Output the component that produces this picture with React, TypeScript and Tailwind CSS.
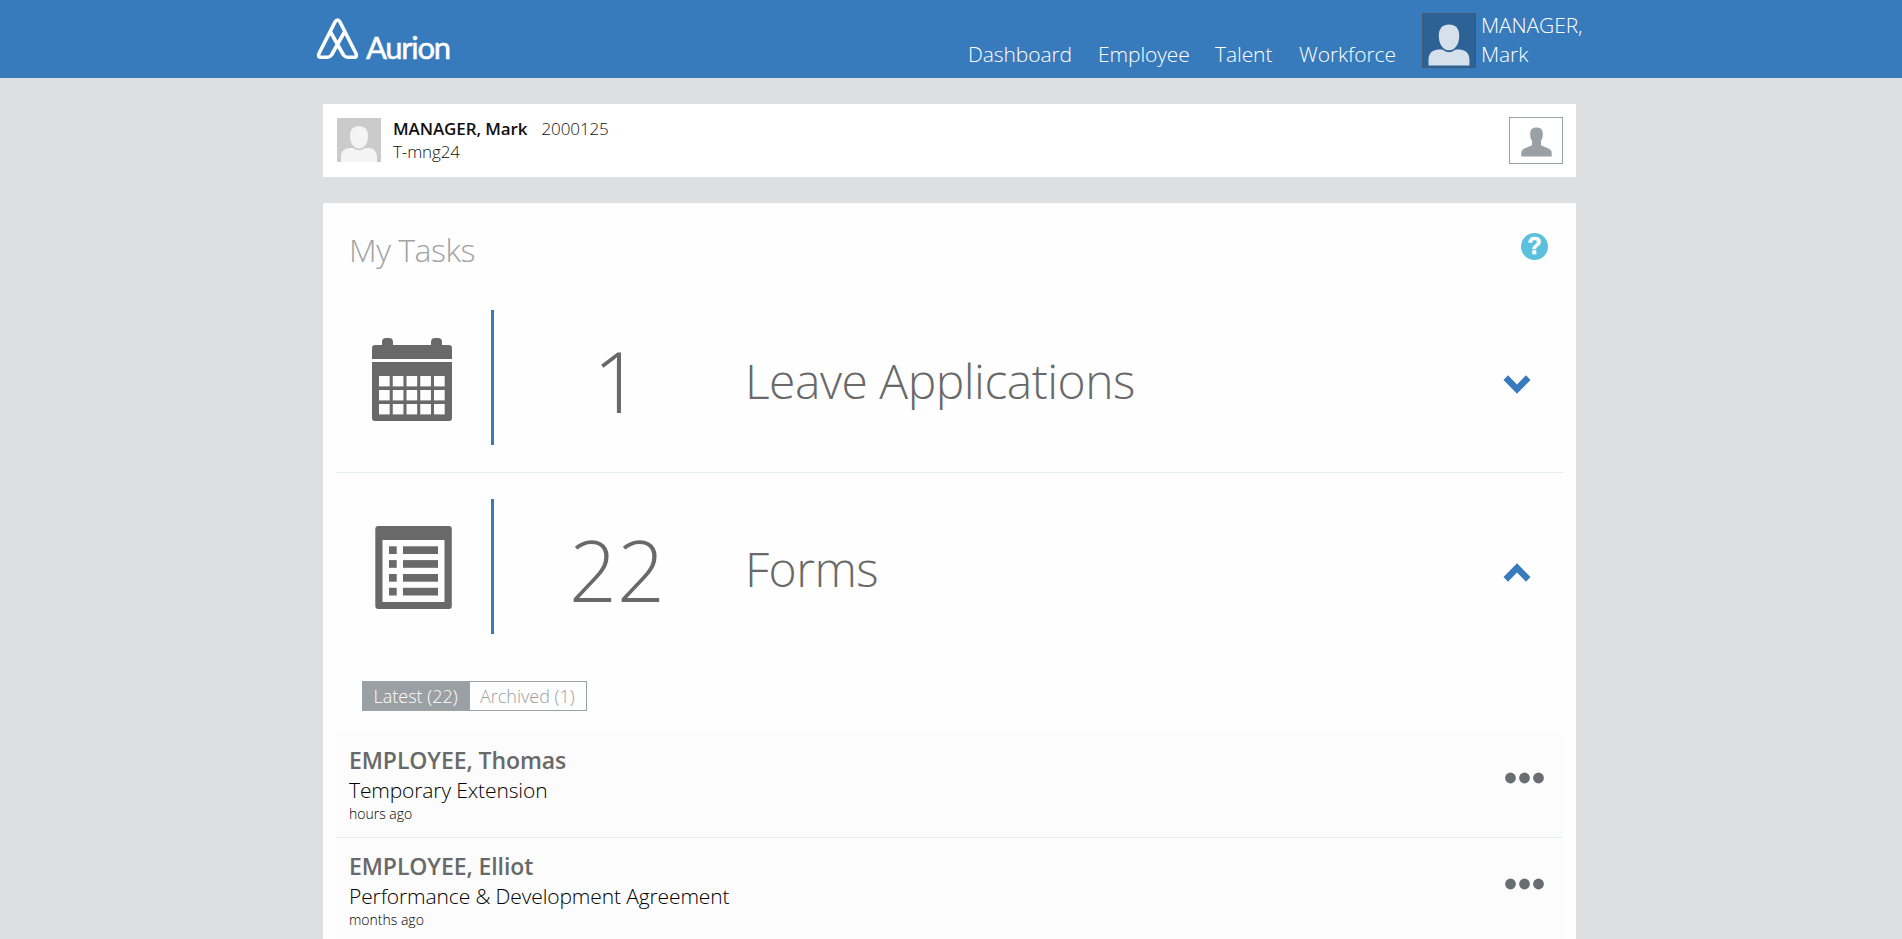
import React from "react";

const NAV = [
  { label: "Dashboard", width: "w-[130px]" },
  { label: "Employee", width: "w-[117px]" },
  { label: "Talent", width: "w-[84px]" },
  { label: "Workforce", width: "w-[123px]" },
];

const ENTRIES = [
  { name: "EMPLOYEE, Thomas", form: "Temporary Extension", age: "hours ago" },
  { name: "EMPLOYEE, Elliot", form: "Performance & Development Agreement", age: "months ago" },
];

function Logo() {
  return (
    <div className="flex w-[652px] pt-[17px]">
      <svg width="43" height="44" viewBox="0 0 43 44" fill="none" stroke="white" strokeWidth="3.600" strokeLinecap="round" strokeLinejoin="round" className="shrink-0">
        <path d="M28.500 15 L15.500 38 Q13.800 40.200 11.500 40.200 H5 Q1.500 40.200 3 36.500 L19 5 Q21.500 1 24 5 L40 36.500 Q41.500 40.200 38 40.200 H31.500 Q29.200 40.200 27.500 38 L14.500 15" />
      </svg>
      <span className="ml-[7px] mt-[13px] font-['Lato'] text-[31px] leading-[35px] tracking-[-1.3px] text-white [-webkit-text-stroke:0.5px_white]">Aurion</span>
    </div>
  );
}

function Portrait({ className, body }: { className: string; body: string }) {
  return (
    <svg viewBox="0 0 44 44" className={className} fill={body}>
      <path d="M4 44 V39 C4 33 8 30 13 30 H16 Q22 34.500 28 30 H31 C36 30 40 33 40 39 V44 Z" />
      <path d="M22 8 C27.500 8 31 11.500 31 17.500 C31 25 27.500 30.500 22 30.500 C16.500 30.500 13 25 13 17.500 C13 11.500 16.500 8 22 8 Z" />
    </svg>
  );
}

function CalendarIcon() {
  return (
    <svg width="80" height="83" viewBox="0 0 80 83" fill="#696969">
      <path d="M0 21 V10 Q0 7 3 7 H10 V4 Q10 0 14 0 H17 Q21 0 21 4 V7 H59 V4 Q59 0 63 0 H66 Q70 0 70 4 V7 H77 Q80 7 80 10 V21 Z" />
      <path d="M0 24 H80 V80 Q80 83 77 83 H3 Q0 83 0 80 Z" />
      <g fill="#fdfdfd">
        {[38, 52, 66].map((y) =>
          [7, 20.75, 34.5, 48.25, 62].map((x) => <rect key={`${x}-${y}`} x={x} y={y} width="10.700" height="10.400" />),
        )}
      </g>
    </svg>
  );
}

function FormIcon() {
  return (
    <svg width="80" height="83" viewBox="0 0 80 83" fill="#696969">
      <rect x="3.300" width="76.500" height="83" rx="3" />
      <rect x="10.500" y="14" width="62" height="62" fill="#fdfdfd" />
      {[20.3, 34.1, 48, 61.8].map((y) => (
        <g key={y}>
          <rect x="17" y={y} width="7.700" height="7.700" />
          <rect x="31" y={y} width="35" height="7.700" />
        </g>
      ))}
    </svg>
  );
}

function TaskRow({ icon, count, title, open }: { icon: React.ReactNode; count: number; title: string; open?: boolean }) {
  return (
    <div className={open ? "flex h-[188px]" : "flex h-[189px] border-b border-[#e7eeee]"}>
      <div className={open ? "w-[155px] shrink-0 pl-[36px] pt-[53px]" : "w-[155px] shrink-0 pl-[36px] pt-[54px]"}>{icon}</div>
      <div className="mt-[26px] h-[135px] w-[3px] shrink-0 bg-[#3d7ab5]" />
      <div className="w-[246px] shrink-0 pt-[40px] text-center text-[84px] font-light leading-[113px] text-[#696969]">{count}</div>
      <div className={open ? "w-[763px] shrink-0 pl-[5px] pt-[63px] text-[48px] font-light leading-[65px] tracking-[-0.5px] text-[#696969]" : "w-[763px] shrink-0 pl-[5px] pt-[64px] text-[48px] font-light leading-[65px] tracking-[-0.5px] text-[#696969]"}>{title}</div>
      <svg width="28" height="20" viewBox="0 0 28 20" fill="#387bbc" className={open ? "mt-[89px] shrink-0 rotate-180" : "mt-[91px] shrink-0"}>
        <path d="M0.500 5 L5 0.300 L14 9.500 L23 0.300 L27.500 5 L14 18.700 Z" />
      </svg>
    </div>
  );
}

export default function App() {
  return (
    <div className="h-[939px] w-full overflow-hidden bg-[#dedfe1] font-['Open_Sans',sans-serif]">
      <header className="flex h-[78px] bg-[#387bbc] pl-[316px] text-white">
        <Logo />
        <nav className="flex pt-[39px] text-[21px] font-light leading-[30px] tracking-[-0.08px]">
          {NAV.map((item) => (
            <a key={item.label} className={item.width}>{item.label}</a>
          ))}
        </nav>
        <div className="mt-[13px] h-[55px] w-[54px] border border-[#3f5b77] bg-[#2d6296] px-[1px]">
          <Portrait className="h-[53px] w-[50px]" body="#d6e0ea" />
        </div>
        <div className="w-[110px] pl-[5px] pt-[11px] text-[21px] font-light leading-[29px] tracking-[-0.1px]">MANAGER, Mark</div>
      </header>

      <section className="ml-[323px] mt-[26px] flex h-[73px] w-[1253px] bg-white pl-[14px] text-[17px] text-[#111]">
        <div className="mt-[14px] size-[44px] bg-[#cbcbcb]">
          <Portrait className="size-[44px]" body="#f4f4f4" />
        </div>
        <div className="w-[1128px] pl-[12px] pt-[13px] font-light leading-[23px] tracking-[-0.1px]">
          <div className="flex">
            <span className="font-semibold">MANAGER, Mark</span>
            <span className="ml-[14px]">2000125</span>
          </div>
          <div>T-mng24</div>
        </div>
        <button className="mt-[13px] flex h-[47px] w-[54px] items-center justify-center border border-[#9aa0a4]">
          <svg width="31" height="30" viewBox="0 0 31 30" fill="#9aa0a4" className="mt-[2px]">
            <path d="M9.200 7 C9.200 2.500 11.500 0.500 15.500 0.500 C19.500 0.500 21.800 2.500 21.800 7 C21.800 10.500 21.200 12.500 20 13.500 V18.300 L27.500 21.500 Q30.700 23 30.700 26 V29.500 H0.300 V26 Q0.300 23 3.500 21.500 L11 18.300 V13.500 C9.800 12.500 9.200 10.500 9.200 7 Z" />
          </svg>
        </button>
      </section>

      <main className="ml-[323px] mt-[26px] h-[760px] w-[1253px] bg-[#fefefe] px-[13px]">
        <div className="flex h-[81px] justify-between">
          <h1 className="pl-[13px] pt-[25px] text-[32px] font-light leading-[43px] tracking-[-0.45px] text-[#9fa3a6]">My Tasks</h1>
          <div className="mr-[15px] mt-[29.5px] flex size-[27px] items-center justify-center rounded-full bg-[#5bc0de] font-['Liberation_Sans'] text-[23px] font-bold leading-[27px] text-white [-webkit-text-stroke:0.6px_white]">?</div>
        </div>

        <TaskRow icon={<CalendarIcon />} count={1} title="Leave Applications" />
        <TaskRow icon={<FormIcon />} count={22} title="Forms" open />

        <div className="flex h-[71px] pl-[26px] pt-[20px] text-[18px] font-light leading-[28px]">
          <div className="h-[30px] w-[108px] border border-[#9aa0a4] bg-[#9aa0a4] pl-[10.5px] text-white">Latest (22)</div>
          <div className="h-[30px] w-[117px] border border-l-0 border-[#9aa0a4] pl-[10px] text-[#9aa0a4]">Archived (1)</div>
        </div>

        {ENTRIES.map((entry) => (
          <div key={entry.name} className="flex h-[106px] justify-between border-b border-[#e7eeee] bg-[#fcfcfc] pl-[13px] text-black">
            <div className="pt-[12px]">
              <div className="text-[23px] font-semibold leading-[32px] tracking-[-0.08px] text-[#696969]">{entry.name}</div>
              <div className="text-[21px] font-light leading-[28px] tracking-[-0.12px]">{entry.form}</div>
              <div className="text-[14px] font-light leading-[20px]">{entry.age}</div>
            </div>
            <svg width="40" height="12" viewBox="0 0 40 12" fill="#696d72" className="mr-[18px] mt-[40px]">
              <circle cx="5.500" cy="6" r="5.400" />
              <circle cx="19.500" cy="6" r="5.400" />
              <circle cx="33.500" cy="6" r="5.400" />
            </svg>
          </div>
        ))}
      </main>
    </div>
  );
}
